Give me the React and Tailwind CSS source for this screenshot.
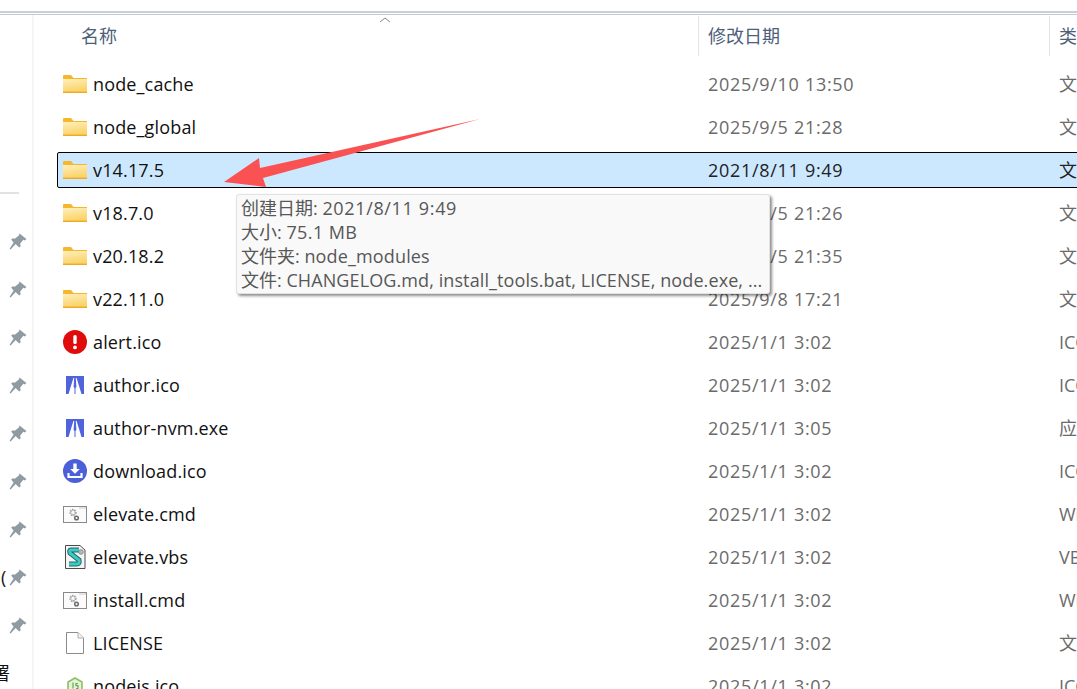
import React from 'react'

const Folder = () => (
  <svg width="24" height="18" viewBox="0 0 24 18" className="shrink-0">
    <defs>
      <linearGradient id="fold" x1="0" y1="0" x2="0.3" y2="1">
        <stop offset="0" stopColor="#fdf0bd" />
        <stop offset="1" stopColor="#fbd36a" />
      </linearGradient>
    </defs>
    <path d="M0 1 Q0 0 1 0 H8 L10.5 3 H24 V8 H0 Z" fill="#f6b72c" />
    <rect x="0" y="4" width="24" height="13" fill="url(#fold)" />
    <rect x="0" y="16.6" width="24" height="1.4" fill="#eeaa22" />
  </svg>
)

const Alert = () => (
  <svg width="24" height="24" viewBox="0 0 24 24" className="shrink-0">
    <circle cx="12" cy="12" r="12" fill="#e00b0b" />
    <rect x="10.3" y="5" width="3.4" height="9" rx="1.5" fill="#fff" />
    <circle cx="12" cy="17.4" r="1.9" fill="#fff" />
  </svg>
)

const Author = () => (
  <svg width="18" height="18" viewBox="0 0 18 18" className="shrink-0">
    <rect width="18" height="18" fill="#4f63dc" />
    <path d="M7.4 2 H10.6 L15.5 18 H2.5 Z" fill="#fff" />
    <path d="M0 18 H3 L5 13 V18 H0 Z M18 18 H15 L13 13 V18 H18 Z" fill="#fff" />
    <path d="M8.2 2 H9.8 L10.4 11 L9.5 12 V18 H8.5 V12 L7.6 11 Z" fill="#4f63dc" />
  </svg>
)

const Download = () => (
  <svg width="24" height="24" viewBox="0 0 24 24" className="shrink-0">
    <circle cx="12" cy="12" r="12" fill="#4a5fd8" />
    <path d="M10.3 4.5 H13.7 V10 H16.8 L12 14.8 L7.2 10 H10.3 Z" fill="#fff" />
    <path d="M5.5 14 V18 H18.5 V14" stroke="#fff" strokeWidth="2.2" fill="none" />
  </svg>
)

const Cmd = () => (
  <svg width="24" height="17" viewBox="0 0 24 17" className="shrink-0">
    <rect x="0.5" y="0.5" width="23" height="16" fill="#fbfbfb" stroke="#8a8a8a" />
    <path d="M16 1.5 H23 V2.5 H16 Z" fill="#c9c9c9" />
    <circle cx="10" cy="6.5" r="2.6" fill="none" stroke="#a4a4a4" strokeWidth="2.2" strokeDasharray="1.5 0.7" />
    <circle cx="13.5" cy="12" r="1.8" fill="#fff" stroke="#6a6a6a" strokeWidth="1.5" />
  </svg>
)

const Vbs = () => (
  <svg width="21" height="24" viewBox="0 0 21 24" className="shrink-0">
    <path d="M0.5 0.5 H15 L20 5 V23.5 H0.5 Z" fill="#f5f5f5" stroke="#4c4c4c" />
    <path d="M14 5 H6 Q4 5 5 8 L14 15 Q15 19 12 19 H4" fill="none" stroke="#0f6f6c" strokeWidth="5" />
    <path d="M14 5 H6 Q4 5 5 8 L14 15 Q15 19 12 19 H4" fill="none" stroke="#45c7c0" strokeWidth="3" />
    <circle cx="16" cy="7" r="2.4" fill="#b5b5b5" stroke="#777" strokeWidth="0.6" />
  </svg>
)

const Doc = () => (
  <svg width="18" height="22" viewBox="0 0 18 22" className="shrink-0">
    <path d="M0.5 0.5 H12 L17.5 6 V21.5 H0.5 Z" fill="#fff" stroke="#8c8c8c" />
    <path d="M12 0.5 V6 H17.5" fill="#f2f2f2" stroke="#b0b0b0" />
  </svg>
)

const Nodejs = () => (
  <svg width="16" height="18" viewBox="0 0 16 18" className="shrink-0">
    <path d="M8 1 L15 5 V13 L8 17 L1 13 V5 Z" fill="#e6f3dc" stroke="#8cc060" strokeWidth="1.6" />
    <path d="M6 5.5 V11.5 M11 6.5 H9 V8.7 H11 V11.5 H9" stroke="#6aa84f" strokeWidth="1.2" fill="none" />
  </svg>
)

const Pin = () => (
  <svg width="18" height="18" viewBox="0 0 18 18">
    <path d="M10.5 0.6 L17.4 6 L16 7.4 L14.4 6.8 L11.2 10.6 L11.6 13.4 L10.2 14.4 L6.6 11 L1.6 16.6 L0.6 15.8 L4.6 9.6 L2.2 6.8 L3.2 5.4 L6.2 5.6 L9.8 2.4 Z" fill="#8f9ba3" />
  </svg>
)

const files = [
  { name: 'node_cache', date: '2025/9/10 13:50', type: '文件夹', icon: <Folder /> },
  { name: 'node_global', date: '2025/9/5 21:28', type: '文件夹', icon: <Folder /> },
  { name: 'v14.17.5', date: '2021/8/11 9:49', type: '文件夹', icon: <Folder />, selected: true },
  { name: 'v18.7.0', date: '2025/9/5 21:26', type: '文件夹', icon: <Folder /> },
  { name: 'v20.18.2', date: '2025/9/5 21:35', type: '文件夹', icon: <Folder /> },
  { name: 'v22.11.0', date: '2025/9/8 17:21', type: '文件夹', icon: <Folder /> },
  { name: 'alert.ico', date: '2025/1/1 3:02', type: 'ICO 文件', icon: <Alert /> },
  { name: 'author.ico', date: '2025/1/1 3:02', type: 'ICO 文件', icon: <Author /> },
  { name: 'author-nvm.exe', date: '2025/1/1 3:05', type: '应用程序', icon: <Author /> },
  { name: 'download.ico', date: '2025/1/1 3:02', type: 'ICO 文件', icon: <Download /> },
  { name: 'elevate.cmd', date: '2025/1/1 3:02', type: 'Windows 命令脚本', icon: <Cmd /> },
  { name: 'elevate.vbs', date: '2025/1/1 3:02', type: 'VBScript 文件', icon: <Vbs /> },
  { name: 'install.cmd', date: '2025/1/1 3:02', type: 'Windows 命令脚本', icon: <Cmd /> },
  { name: 'LICENSE', date: '2025/1/1 3:02', type: '文件', icon: <Doc /> },
  { name: 'nodejs.ico', date: '2025/1/1 3:02', type: 'ICO 文件', icon: <Nodejs /> },
]

const Row = ({ f }) => (
  <div className={`flex items-center h-9 w-[1100px] shrink-0 rounded-[2px] border whitespace-nowrap ${f.selected ? 'bg-[#cce8ff] border-black' : 'border-transparent'}`}>
    <div className="w-[24px] ml-[5px] mr-[6px] flex justify-center shrink-0">{f.icon}</div>
    <div className="w-[615px] shrink-0 text-[#111] tracking-[0.15px]">{f.name}</div>
    <div className={`w-[351px] shrink-0 tracking-[0.7px] ${f.selected ? 'text-[#222]' : 'text-[#6b6b6b]'}`}>{f.date}</div>
    <div className={f.selected ? 'text-[#222]' : 'text-[#6b6b6b]'}>{f.type}</div>
  </div>
)

export default function App() {
  return (
    <div className="relative h-[689px] w-[1077px] overflow-hidden bg-white text-[18px] leading-6" style={{ fontFamily: '"Open Sans", "Noto Sans CJK SC", sans-serif' }}>
      <div className="h-[11px]" />
      <div className="h-[2px] bg-[#c3d0de]" />
      <div className="h-[1px] bg-white" />
      <div className="h-[1px] bg-[#c9c9c9]" />

      <div className="flex">
        <div className="w-[34px] h-[674px] shrink-0 border-r-2 border-[#f5f5f5] flex flex-col">
          <div className="mt-[177px] h-[2px] w-[19px] bg-[#e2e2e2]" />
          <div className="mt-[24px] flex flex-col">
            {Array.from({ length: 9 }).map((_, i) => (
              <div key={i} className="relative h-12 flex items-center pl-[9px]">
                <Pin />
                {i === 7 && <span className="absolute left-[1px] top-[11px] text-[#111]">(</span>}
              </div>
            ))}
          </div>
          <div className="mt-[11px] ml-[-8px] text-[#111] whitespace-nowrap">署</div>
        </div>

        <div className="flex-1 min-w-0 -ml-px">
          <div className="flex h-[41px] pt-[1px] text-[#4c607a] whitespace-nowrap">
            <div className="w-[665px] pl-[48px] shrink-0 flex items-center relative">
              名称
              <svg width="12" height="6" viewBox="0 0 12 6" className="absolute left-[346px] top-[1px]">
                <path d="M1 5 L6 1 L11 5" stroke="#8a8a8a" fill="none" />
              </svg>
            </div>
            <div className="w-[351px] shrink-0 border-l border-[#e5e5e5] pl-[9px] flex items-center">修改日期</div>
            <div className="border-l border-[#e5e5e5] pl-[9px] flex items-center">类型</div>
          </div>

          <div className="ml-[24px] mt-[10px] flex flex-col gap-[7px]">
            {files.map(f => <Row key={f.name} f={f} />)}
          </div>
        </div>
      </div>

      {/* hover tooltip */}
      <div className="absolute left-[236px] top-[194px] w-[534px] h-[100px] rounded-[3px] border border-[#e2e2e2] bg-[#f9f9f9] pl-[4px] pt-[1px] text-[#575757] whitespace-nowrap shadow-[2px_2px_3px_rgba(0,0,0,0.45)]">
        <div>创建日期: <span className="tracking-[0.65px]">2021/8/11 9:49</span></div>
        <div>大小: <span className="tracking-[0.4px]">75.1 MB</span></div>
        <div>文件夹: <span className="tracking-[0.15px]">node_modules</span></div>
        <div>文件: <span className="tracking-[0.1px]">CHANGELOG.md, install_tools.bat, LICENSE, node.exe, ...</span></div>
      </div>

      {/* red annotation arrow */}
      <svg className="absolute left-0 top-0 pointer-events-none" width="1077" height="689">
        <path d="M480 119 L263 178 L266 187 L224 182 L259 158 L260 168 Z" fill="#fa5252" />
      </svg>
    </div>
  )
}
